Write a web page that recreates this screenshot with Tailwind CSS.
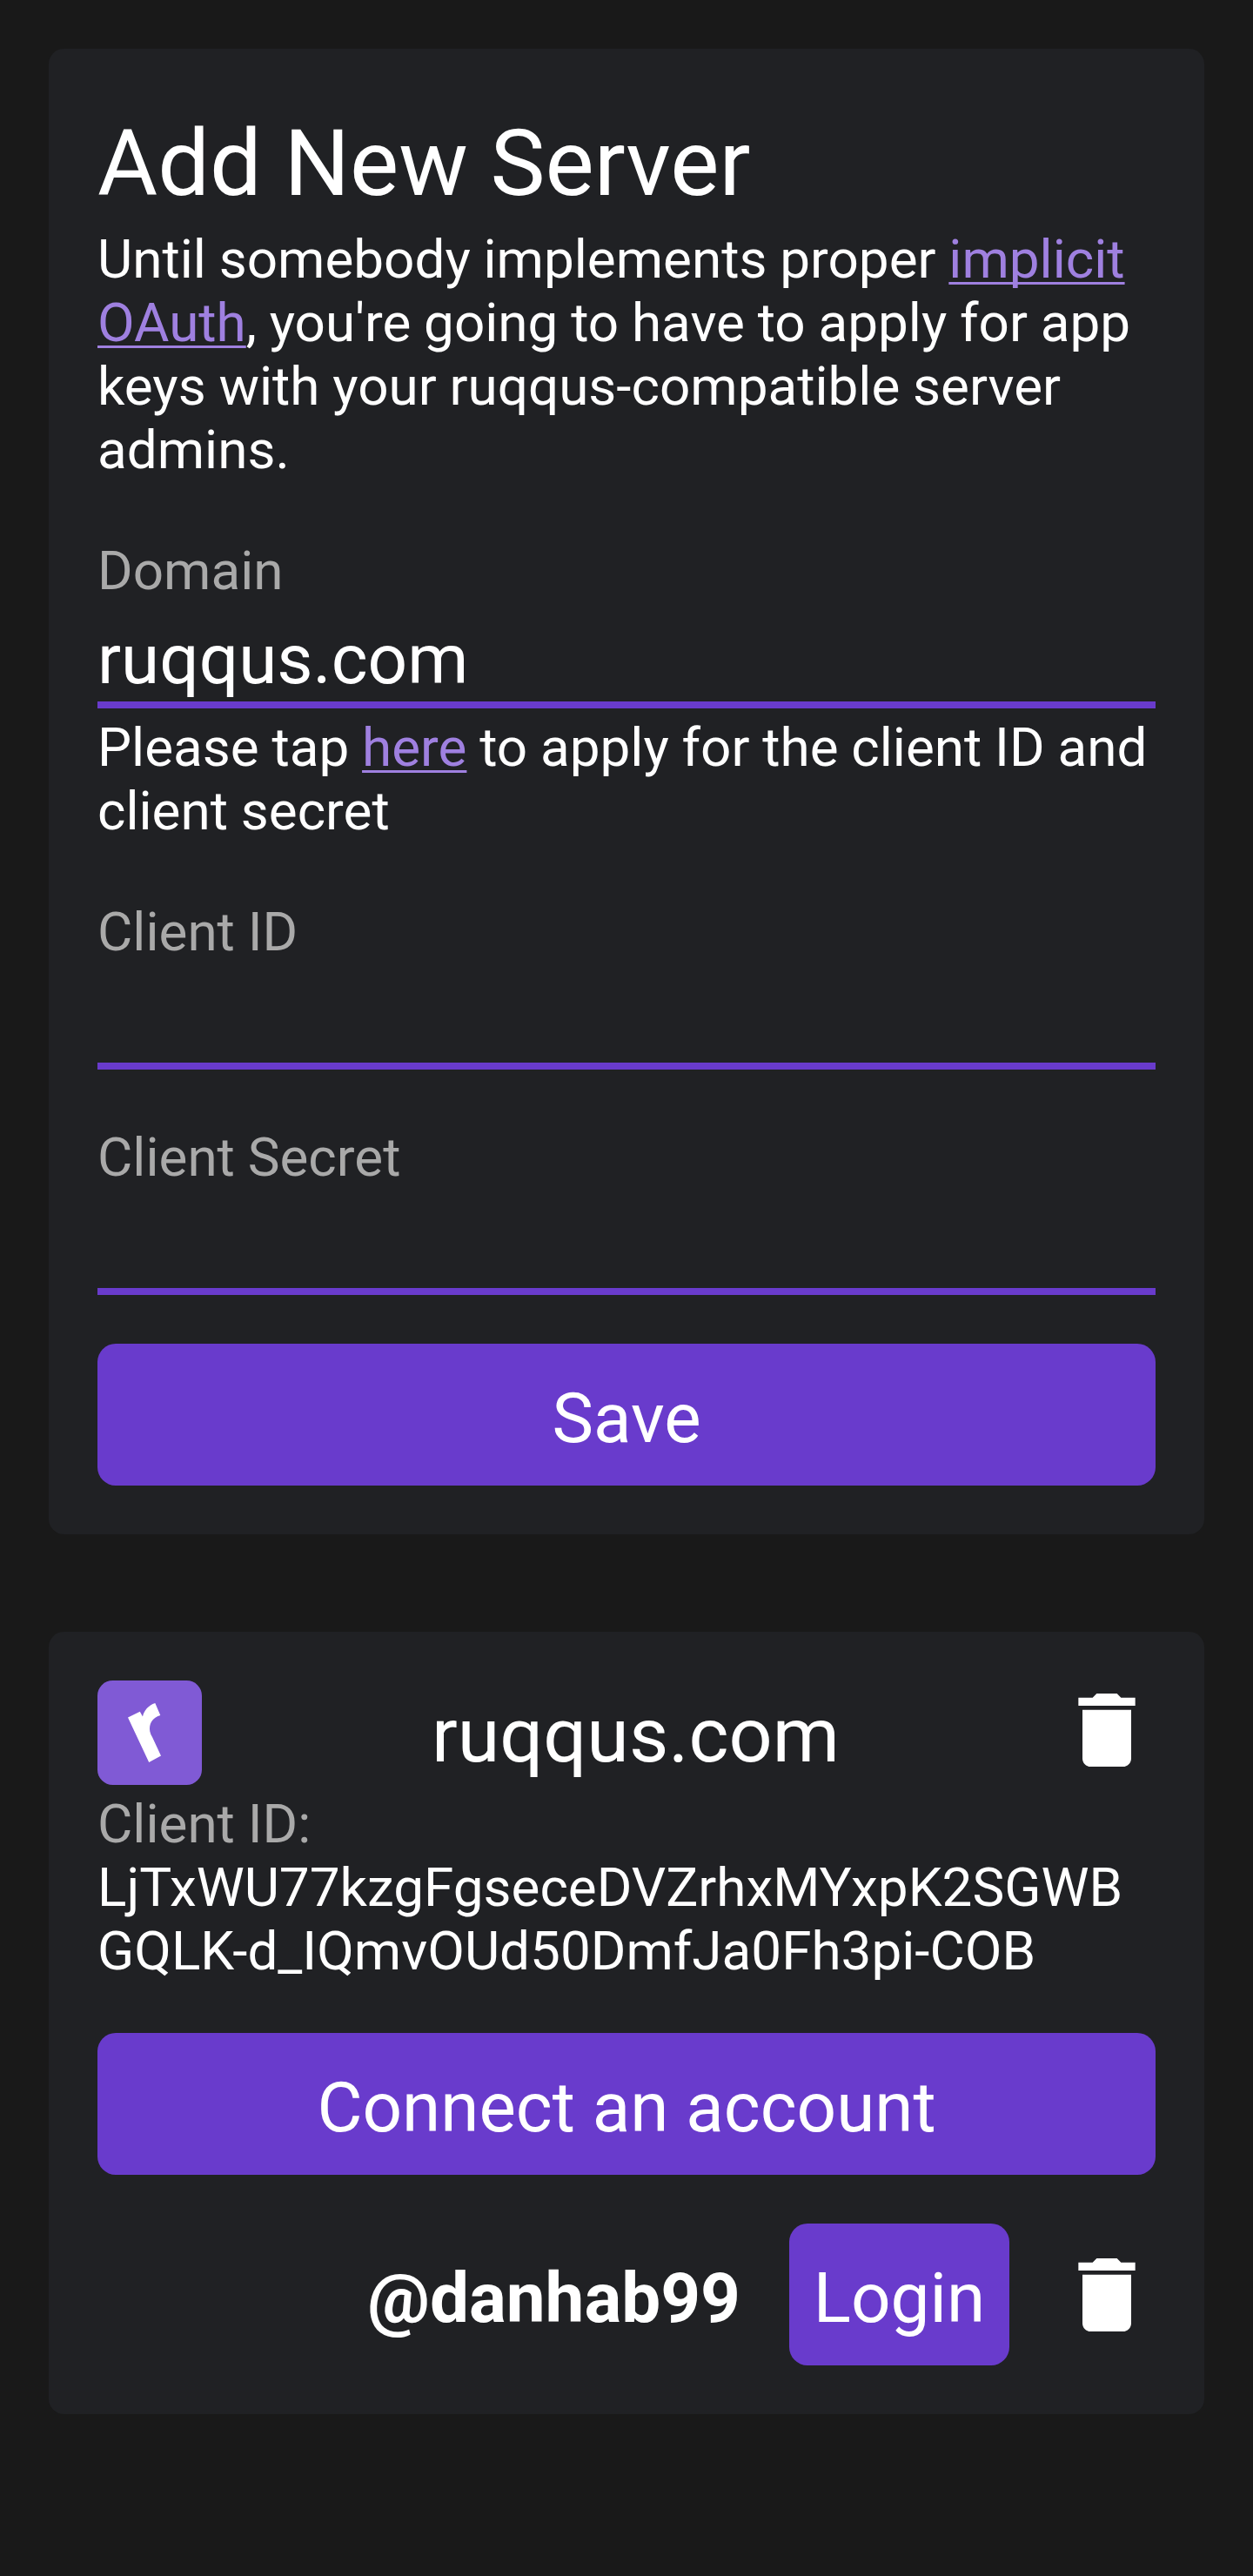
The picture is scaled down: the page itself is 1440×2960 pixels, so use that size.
<!DOCTYPE html>
<html lang="en">
<head>
<meta charset="utf-8">
<title>Servers</title>
<script src="https://cdn.jsdelivr.net/npm/@tailwindcss/browser@4"></script>
</head>
<body class="min-h-[2960px] bg-[#191919] p-[56px] font-['Roboto',sans-serif] text-[62px] leading-[73px] text-white [word-spacing:-0.6px]">
<main class="flex flex-col gap-[112px]">
  <section class="rounded-[17.5px] bg-[#202124] p-[56px]">
    <h1 class="mt-[14px] mb-[11px] text-[106px] leading-[124px]">Add New Server</h1>
    <p>Until somebody implements proper <a class="text-[#9f80e0] underline decoration-[3px] underline-offset-[5px] [text-decoration-skip-ink:none]">implicit OAuth</a>, you're going to have to apply for app keys with your ruqqus-compatible server admins.</p>
    <label for="domain" class="mt-[66px] block text-[#a9a9a9]">Domain</label>
    <input id="domain" type="text" value="ruqqus.com" class="mt-[19px] block h-[103px] w-full border-b-8 border-[#693bcc] pb-px text-[80px] leading-[94px] outline-none">
    <p class="mt-2">Please tap <a class="text-[#9f80e0] underline decoration-[3px] underline-offset-[5px] [text-decoration-skip-ink:none]">here</a> to apply for the client ID and client secret</p>
    <label for="client-id" class="mt-[66px] block text-[#a9a9a9]">Client ID</label>
    <input id="client-id" type="text" class="mt-[19px] block h-[103px] w-full border-b-8 border-[#693bcc] pb-px text-[80px] leading-[94px] outline-none">
    <label for="client-secret" class="mt-16 block text-[#a9a9a9]">Client Secret</label>
    <input id="client-secret" type="text" class="mt-[19px] block h-[103px] w-full border-b-8 border-[#693bcc] pb-px text-[80px] leading-[94px] outline-none">
    <button class="mt-14 flex h-[163px] w-full items-center justify-center rounded-[21px] bg-[#693bcc] pt-[9px] text-[80px] leading-[94px]">Save</button>
  </section>

  <section class="rounded-[17.5px] bg-[#202124] p-[56px]">
    <div class="flex h-[120px] items-start">
      <svg class="size-[120px] shrink-0 rounded-[17.5px] bg-[#805ad5]" viewBox="0 0 120 120" fill="#fff">
        <path d="M35 42.6 48.8 35.8 52 41.4C53.5 34.5 58.5 28.500 66.3 26L72.3 40C62.5 43 59 50 60.300 58.5Q61 62 63 65L73 86.500 59.200 94Z"/>
      </svg>
      <h2 class="mt-[11px] ml-[264px] grow text-[88px] leading-[103px]">ruqqus.com</h2>
      <svg class="mt-px size-[112px] shrink-0" viewBox="0 0 24 24" fill="#fff">
        <path d="M6 19c0 1.1.9 2 2 2h8c1.1 0 2-.9 2-2V7H6v12zM19 4h-3.500l-1-1h-5l-1 1H5v2h14V4z"/>
      </svg>
    </div>
    <div class="mt-2 text-[#a9a9a9]">Client ID:</div>
    <div>LjTxWU77kzgFgseceDVZrhxMYxpK2SGWB<br>GQLK-d_IQmvOUd50DmfJa0Fh3pi-COB</div>
    <button class="mt-[58px] flex h-[163px] w-full items-center justify-center rounded-[21px] bg-[#693bcc] pt-[9px] text-[80px] leading-[94px]">Connect an account</button>
    <div class="mt-14 flex h-[163px] justify-end gap-14 text-[80px] leading-[94px]">
      <div class="mt-[39px] font-bold">@danhab99</div>
      <button class="flex w-[253px] items-center justify-center rounded-[21px] bg-[#693bcc] pt-[9px]">Login</button>
      <svg class="mt-[26px] size-[112px] shrink-0" viewBox="0 0 24 24" fill="#fff">
        <path d="M6 19c0 1.1.9 2 2 2h8c1.1 0 2-.9 2-2V7H6v12zM19 4h-3.500l-1-1h-5l-1 1H5v2h14V4z"/>
      </svg>
    </div>
  </section>
</main>
</body>
</html>
